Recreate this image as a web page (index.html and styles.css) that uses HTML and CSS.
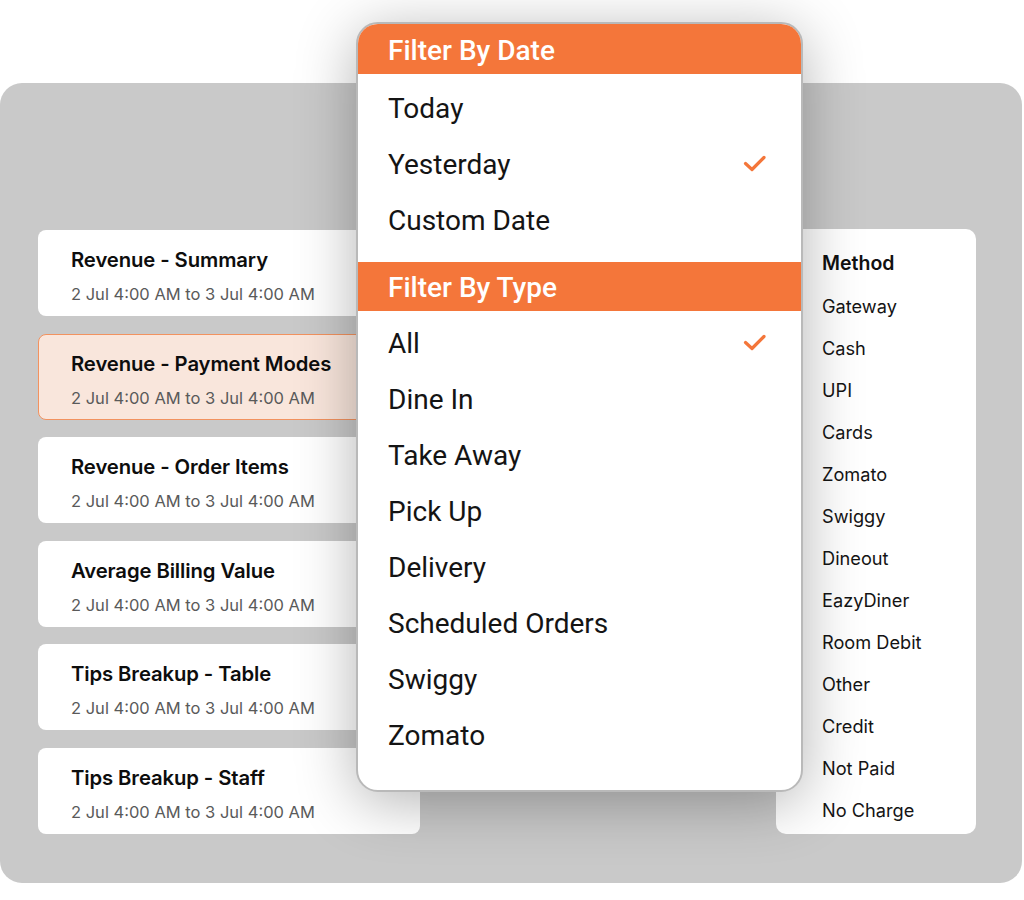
FILE: index.html
```html
<!DOCTYPE html>
<html>
<head>
<meta charset="utf-8">
<link rel="stylesheet" href="styles.css">
</head>
<body>
<div class="stage">
  <div class="panel">
    <div class="reports">
      <div class="card">
        <div class="card-title">Revenue - Summary</div>
        <div class="card-date">2 Jul 4:00 AM to 3 Jul 4:00 AM</div>
      </div>
      <div class="card active">
        <div class="card-title">Revenue - Payment Modes</div>
        <div class="card-date">2 Jul 4:00 AM to 3 Jul 4:00 AM</div>
      </div>
      <div class="card">
        <div class="card-title">Revenue - Order Items</div>
        <div class="card-date">2 Jul 4:00 AM to 3 Jul 4:00 AM</div>
      </div>
      <div class="card">
        <div class="card-title">Average Billing Value</div>
        <div class="card-date">2 Jul 4:00 AM to 3 Jul 4:00 AM</div>
      </div>
      <div class="card">
        <div class="card-title">Tips Breakup - Table</div>
        <div class="card-date">2 Jul 4:00 AM to 3 Jul 4:00 AM</div>
      </div>
      <div class="card">
        <div class="card-title">Tips Breakup - Staff</div>
        <div class="card-date">2 Jul 4:00 AM to 3 Jul 4:00 AM</div>
      </div>
    </div>
    <div class="methods">
      <div class="method-head">Method</div>
      <div class="method">Gateway</div>
      <div class="method">Cash</div>
      <div class="method">UPI</div>
      <div class="method">Cards</div>
      <div class="method">Zomato</div>
      <div class="method">Swiggy</div>
      <div class="method">Dineout</div>
      <div class="method">EazyDiner</div>
      <div class="method">Room Debit</div>
      <div class="method">Other</div>
      <div class="method">Credit</div>
      <div class="method">Not Paid</div>
      <div class="method">No Charge</div>
    </div>
  </div>

  <div class="dropdown">
    <div class="dd-head">Filter By Date</div>
    <div class="dd-list dd-list-date">
      <div class="dd-item">Today</div>
      <div class="dd-item">Yesterday
        <svg class="check" width="24" height="18" viewBox="0 0 24 18"><path d="M2.5 8.5 L9 14.5 L21 2.5" fill="none" stroke="#f4763a" stroke-width="3.2" stroke-linecap="round" stroke-linejoin="round"/></svg>
      </div>
      <div class="dd-item">Custom Date</div>
    </div>
    <div class="dd-head dd-head-2">Filter By Type</div>
    <div class="dd-list dd-list-type">
      <div class="dd-item">All
        <svg class="check" width="24" height="18" viewBox="0 0 24 18"><path d="M2.5 8.5 L9 14.5 L21 2.5" fill="none" stroke="#f4763a" stroke-width="3.2" stroke-linecap="round" stroke-linejoin="round"/></svg>
      </div>
      <div class="dd-item">Dine In</div>
      <div class="dd-item">Take Away</div>
      <div class="dd-item">Pick Up</div>
      <div class="dd-item">Delivery</div>
      <div class="dd-item">Scheduled Orders</div>
      <div class="dd-item">Swiggy</div>
      <div class="dd-item">Zomato</div>
    </div>
  </div>
</div>
</body>
</html>
```

FILE: styles.css
```css
* { box-sizing: border-box; }
html, body { margin: 0; padding: 0; background: #ffffff; }
body { width: 1024px; height: 900px; overflow: hidden; font-family: Inter, "Noto Sans", sans-serif; }

.stage { position: relative; width: 1024px; height: 900px; padding-top: 83px; }

.panel {
  width: 1022px;
  height: 800px;
  background: #c9c9c9;
  border-radius: 22px;
  display: flex;
  align-items: flex-start;
  padding: 146px 0 0 38px;
}

.reports {
  width: 382px;
  display: flex;
  flex-direction: column;
  gap: 17.6px;
  margin-top: 1px;
}

.card {
  height: 86px;
  background: #ffffff;
  border-radius: 8px;
  padding: 16px 0 0 32px;
  border: 1px solid transparent;
}
.card.active {
  background: #f9e6dc;
  border-color: #f2925f;
}
.card-title {
  font-family: Inter, "Noto Sans", sans-serif;
  font-weight: 600;
  font-size: 20.3px;
  line-height: 26px;
  color: #0d0d0d;
  letter-spacing: -0.1px;
}
.card-date {
  margin-top: 11px;
  font-family: Inter, "Noto Sans", sans-serif;
  font-weight: 400;
  font-size: 16.5px;
  line-height: 20px;
  color: #5a5a5a;
}

.methods {
  margin-left: 356px;
  width: 200px;
  height: 605px;
  background: #ffffff;
  border-radius: 10px;
  padding: 20px 0 0 46px;
}
.method-head {
  font-family: Inter, "Noto Sans", sans-serif;
  font-weight: 600;
  font-size: 19.5px;
  line-height: 28px;
  color: #111;
  margin-bottom: 8px;
}
.method {
  font-family: Inter, "Noto Sans", sans-serif;
  font-size: 18.2px;
  line-height: 42px;
  color: #141414;
}

.dropdown {
  position: absolute;
  left: 356px;
  top: 22px;
  width: 447px;
  height: 770px;
  background: #ffffff;
  border: 2px solid #b9b9b9;
  border-radius: 22px;
  overflow: hidden;
  box-shadow: 0 10px 60px rgba(0, 0, 0, 0.3);
  font-family: Roboto, "Noto Sans", sans-serif;
}
.dd-head {
  height: 50px;
  background: #f4763a;
  color: #ffffff;
  font-weight: 500;
  font-size: 28px;
  line-height: 54px;
  padding-left: 30px;
}
.dd-head-2 { height: 49px; line-height: 51px; }
.dd-list-date { padding: 6px 0 14px; }
.dd-list-type { padding: 4px 0 0; }
.dd-item {
  height: 56px;
  display: flex;
  align-items: center;
  justify-content: space-between;
  padding: 0 34px 0 30px;
  font-size: 28px;
  color: #141414;
}
.check { display: block; }
```
